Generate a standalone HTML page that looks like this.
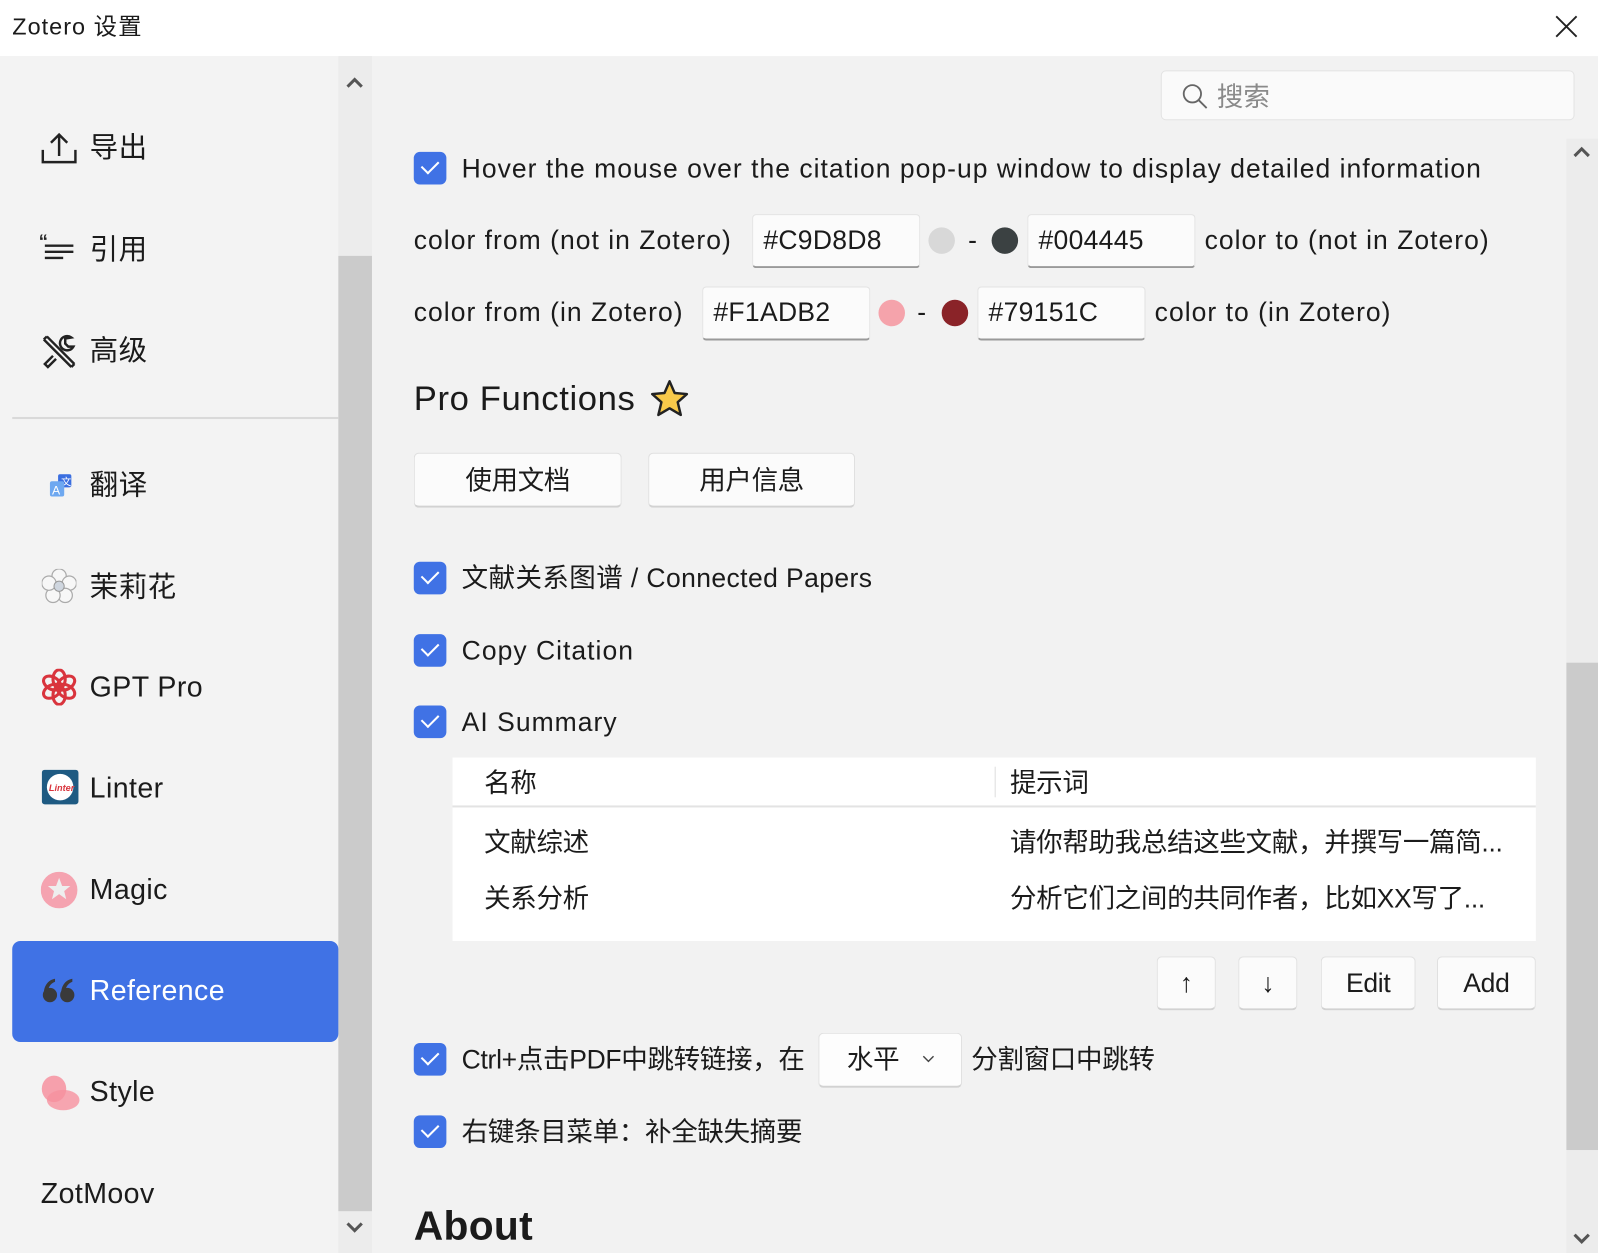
<!DOCTYPE html>
<html><head><meta charset="utf-8">
<style>
html,body{margin:0;padding:0;width:1598px;height:1253px;overflow:hidden;background:#f2f2f2}
#w{position:absolute;left:0;top:0;width:1568px;height:1229px;transform:scale(1.01913,1.01953);transform-origin:0 0;background:#f2f2f2;font-family:"Liberation Sans","Noto Sans CJK SC",sans-serif;color:#1b1b1b}
.a{position:absolute;white-space:nowrap}
.t{font-size:26px;line-height:34px;letter-spacing:1px}
.c{letter-spacing:-0.3px}
.side{font-size:28px;line-height:36px;letter-spacing:0.4px}
.cb{position:absolute;width:32px;height:32px;border-radius:6px;background:#4072e5}
.cb:after{content:"";position:absolute;left:8px;top:8px;width:14px;height:8px;border-left:2.5px solid #fff;border-bottom:2.5px solid #fff;transform:rotate(-45deg);transform-origin:center}
.inp{position:absolute;background:#fbfbfb;border:1px solid #e3e3e3;border-bottom:2px solid #9a9a9a;border-radius:4px;box-sizing:border-box;font-size:26px;line-height:48px;padding-left:10px;letter-spacing:0.3px}
.btn{position:absolute;background:#fbfbfb;border:1px solid #e0e0e0;border-bottom:2px solid #d2d2d2;border-radius:5px;box-sizing:border-box;font-size:26px;text-align:center;letter-spacing:-0.3px}
.dot{position:absolute;width:26px;height:26px;border-radius:50%}
</style></head><body><div id="w">
<div class="a" style="left:0;top:0;width:1568px;height:55px;background:#fff"></div>
<div class="a" style="left:12px;top:10px;font-size:23px;line-height:32px;letter-spacing:1px">Zotero 设置</div>
<svg class="a" style="left:1525px;top:14px" width="24" height="24" viewBox="0 0 24 24"><path d="M2 2L22 22M22 2L2 22" stroke="#222" stroke-width="1.8"/></svg>

<div class="a" style="left:0;top:55px;width:332px;height:1174px;background:#f3f3f3"></div>
<div class="a" style="left:332px;top:55px;width:33px;height:1174px;background:#ececec"></div>
<div class="a" style="left:332px;top:251px;width:33px;height:937px;background:#cbcbcb"></div>
<svg class="a" style="left:339px;top:74px" width="18" height="14" viewBox="0 0 18 14"><path d="M2 11L9 4L16 11" stroke="#555" stroke-width="3" fill="none"/></svg>
<svg class="a" style="left:339px;top:1197px" width="18" height="14" viewBox="0 0 18 14"><path d="M2 3L9 10L16 3" stroke="#555" stroke-width="3" fill="none"/></svg>

<svg class="a" style="left:40px;top:129px" width="36" height="32" viewBox="0 0 36 32"><path d="M2 18V30H34V18M18 24V3M10 11L18 3L26 11" stroke="#222" stroke-width="2.4" fill="none"/></svg>
<div class="a side c" style="left:88px;top:127px">导出</div>
<svg class="a" style="left:38px;top:227px" width="42" height="36" viewBox="0 0 42 36"><text x="0" y="16" font-size="18" font-weight="bold" font-family="Liberation Sans" fill="#222">“</text><path d="M6 14H34M6 20H34M6 26H24" stroke="#222" stroke-width="2.4"/><text x="25" y="40" font-size="18" font-weight="bold" font-family="Liberation Sans" fill="#222">„</text></svg>
<div class="a side c" style="left:88px;top:227px">引用</div>
<svg class="a" style="left:40px;top:327px" width="36" height="36" viewBox="0 0 36 36"><path d="M6 3L33 30M3 6L30 33M3 6L6 3M30 33L33 30" stroke="#222" stroke-width="2.4" fill="none"/><path d="M30 4A7 7 0 1 0 32 13L27 13L24 10L24 5Z M12 22L4 30L7 33L15 25" stroke="#222" stroke-width="2.4" fill="none"/></svg>
<div class="a side c" style="left:88px;top:326px">高级</div>
<div class="a" style="left:12px;top:409px;width:320px;height:2px;background:#d9d9d9"></div>

<svg class="a" style="left:48px;top:465px" width="24" height="24" viewBox="0 0 24 24"><rect x="9" y="0" width="13" height="13" rx="2" fill="#3a6ee0"/><text x="12" y="11" font-size="10" fill="#fff">文</text><rect x="1" y="7" width="14" height="15" rx="2" fill="#6ea8f0"/><text x="3" y="20" font-size="12" fill="#fff" font-family="Liberation Sans">A</text></svg>
<div class="a side c" style="left:88px;top:458px">翻译</div>
<svg class="a" style="left:41px;top:558px" width="34" height="34" viewBox="0 0 34 34"><g fill="#f7f7f7" stroke="#aaa" stroke-width="1.2"><circle cx="17" cy="7" r="7"/><circle cx="27" cy="14" r="7"/><circle cx="23" cy="26" r="7"/><circle cx="11" cy="26" r="7"/><circle cx="7" cy="14" r="7"/></g><circle cx="17" cy="17" r="5" fill="#cfd6df" stroke="#999"/></svg>
<div class="a side c" style="left:88px;top:558px">茉莉花</div>
<svg class="a" style="left:40px;top:656px" width="36" height="36" viewBox="0 0 36 36"><g fill="none" stroke="#d9343d" stroke-width="3"><ellipse cx="18" cy="10" rx="6" ry="9"/><ellipse cx="18" cy="10" rx="6" ry="9" transform="rotate(60 18 18)"/><ellipse cx="18" cy="10" rx="6" ry="9" transform="rotate(120 18 18)"/><ellipse cx="18" cy="10" rx="6" ry="9" transform="rotate(180 18 18)"/><ellipse cx="18" cy="10" rx="6" ry="9" transform="rotate(240 18 18)"/><ellipse cx="18" cy="10" rx="6" ry="9" transform="rotate(300 18 18)"/></g></svg>
<div class="a side" style="left:88px;top:656px">GPT Pro</div>
<svg class="a" style="left:41px;top:755px" width="36" height="36" viewBox="0 0 36 36"><rect width="36" height="34" rx="3" fill="#1e5a82"/><circle cx="18" cy="17" r="13" fill="#fff"/><text x="7" y="21" font-size="9" font-style="italic" font-weight="bold" fill="#d9343d" font-family="Liberation Sans">Linter</text></svg>
<div class="a side" style="left:88px;top:755px">Linter</div>
<svg class="a" style="left:40px;top:855px" width="36" height="36" viewBox="0 0 36 36"><circle cx="18" cy="18" r="18" fill="#f5a3b0"/><path d="M18 6L21 14L29 14L23 19L25 27L18 22L11 27L13 19L7 14L15 14Z" fill="#eee"/></svg>
<div class="a side" style="left:88px;top:855px">Magic</div>

<div class="a" style="left:12px;top:923px;width:320px;height:99px;background:#4072e5;border-radius:8px"></div>
<svg class="a" style="left:41px;top:958px" width="34" height="26" viewBox="0 0 34 26"><g fill="#3a3a3a"><circle cx="8" cy="18" r="7"/><path d="M2 17C2 8 7 3 13 2L13 5C8 7 6 11 6 16Z"/><circle cx="25" cy="18" r="7"/><path d="M19 17C19 8 24 3 30 2L30 5C25 7 23 11 23 16Z"/></g></svg>
<div class="a side" style="left:88px;top:954px;color:#fff">Reference</div>

<svg class="a" style="left:40px;top:1054px" width="38" height="36" viewBox="0 0 38 36"><ellipse cx="13" cy="14" rx="12" ry="13" fill="#f6919f" opacity=".85"/><ellipse cx="22" cy="25" rx="16" ry="10" fill="#f6919f" opacity=".8"/></svg>
<div class="a side" style="left:88px;top:1053px">Style</div>
<div class="a side" style="left:40px;top:1153px">ZotMoov</div>

<div class="a" style="left:1139px;top:69px;width:406px;height:49px;background:#fafafa;border:1px solid #e3e3e3;border-radius:5px;box-sizing:border-box"></div>
<svg class="a" style="left:1159px;top:81px" width="28" height="28" viewBox="0 0 28 28"><circle cx="11" cy="11" r="8.5" stroke="#666" stroke-width="1.8" fill="none"/><path d="M17 17L25 25" stroke="#666" stroke-width="1.8"/></svg>
<div class="a" style="left:1194px;top:78px;font-size:26px;line-height:34px;color:#8a8a8a">搜索</div>

<div class="a" style="left:1537px;top:136px;width:31px;height:1093px;background:#ececec"></div>
<div class="a" style="left:1537px;top:650px;width:31px;height:478px;background:#cbcbcb"></div>
<svg class="a" style="left:1543px;top:142px" width="18" height="14" viewBox="0 0 18 14"><path d="M2 11L9 4L16 11" stroke="#555" stroke-width="3" fill="none"/></svg>
<svg class="a" style="left:1543px;top:1208px" width="18" height="14" viewBox="0 0 18 14"><path d="M2 3L9 10L16 3" stroke="#555" stroke-width="3" fill="none"/></svg>

<div class="cb" style="left:406px;top:149px"></div>
<div class="a t" style="left:453px;top:148px">Hover the mouse over the citation pop-up window to display detailed information</div>

<div class="a t" style="left:406px;top:218px">color from (not in Zotero)</div>
<div class="inp" style="left:738px;top:210px;width:165px;height:53px">#C9D8D8</div>
<div class="dot" style="left:911px;top:223px;background:#d8d8d8"></div>
<div class="a t" style="left:950px;top:218px">-</div>
<div class="dot" style="left:973px;top:223px;background:#3b4142"></div>
<div class="inp" style="left:1008px;top:210px;width:165px;height:53px">#004445</div>
<div class="a t" style="left:1182px;top:218px">color to (not in Zotero)</div>

<div class="a t" style="left:406px;top:289px">color from (in Zotero)</div>
<div class="inp" style="left:689px;top:281px;width:165px;height:53px">#F1ADB2</div>
<div class="dot" style="left:862px;top:294px;background:#f5a3ab"></div>
<div class="a t" style="left:900px;top:289px">-</div>
<div class="dot" style="left:924px;top:294px;background:#8a2328"></div>
<div class="inp" style="left:959px;top:281px;width:165px;height:53px">#79151C</div>
<div class="a t" style="left:1133px;top:289px">color to (in Zotero)</div>

<div class="a" style="left:406px;top:369px;font-size:34px;line-height:44px;letter-spacing:0.6px">Pro Functions</div>
<svg class="a" style="left:637px;top:371px" width="40" height="40" viewBox="0 0 40 40"><path d="M20 3L25 14.5L37 15.5L28 23.5L31 36L20 29.5L9 36L12 23.5L3 15.5L15 14.5Z" fill="#f8c94a" stroke="#222" stroke-width="2.4" stroke-linejoin="round"/></svg>

<div class="btn" style="left:406px;top:444px;width:204px;height:54px;line-height:52px">使用文档</div>
<div class="btn" style="left:636px;top:444px;width:203px;height:54px;line-height:52px">用户信息</div>

<div class="cb" style="left:406px;top:551px"></div>
<div class="a t" style="left:453px;top:550px;letter-spacing:0.4px">文献关系图谱 / Connected Papers</div>
<div class="cb" style="left:406px;top:622px"></div>
<div class="a t" style="left:453px;top:621px">Copy Citation</div>
<div class="cb" style="left:406px;top:692px"></div>
<div class="a t" style="left:453px;top:691px">AI Summary</div>

<div class="a" style="left:444px;top:743px;width:1063px;height:180px;background:#fff"></div>
<div class="a" style="left:444px;top:790px;width:1063px;height:2px;background:#e3e3e3"></div>
<div class="a" style="left:976px;top:752px;width:1px;height:30px;background:#ddd"></div>
<div class="a t c" style="left:475px;top:751px">名称</div>
<div class="a t c" style="left:991px;top:751px">提示词</div>
<div class="a t c" style="left:475px;top:809px">文献综述</div>
<div class="a t c" style="left:991px;top:809px">请你帮助我总结这些文献，并撰写一篇简...</div>
<div class="a t c" style="left:475px;top:864px">关系分析</div>
<div class="a t c" style="left:991px;top:864px">分析它们之间的共同作者，比如XX写了...</div>

<div class="btn" style="left:1135px;top:938px;width:58px;height:53px;line-height:51px">↑</div>
<div class="btn" style="left:1215px;top:938px;width:58px;height:53px;line-height:51px">↓</div>
<div class="btn" style="left:1296px;top:938px;width:93px;height:53px;line-height:51px">Edit</div>
<div class="btn" style="left:1410px;top:938px;width:97px;height:53px;line-height:51px">Add</div>

<div class="cb" style="left:406px;top:1023px"></div>
<div class="a t c" style="left:453px;top:1022px">Ctrl+点击PDF中跳转链接，在</div>
<div class="btn" style="left:803px;top:1013px;width:141px;height:54px;line-height:50px;text-align:left;padding-left:27px;background:#fdfdfd">水平</div>
<svg class="a" style="left:904px;top:1034px" width="14" height="10" viewBox="0 0 14 10"><path d="M2 2L7 7L12 2" stroke="#444" stroke-width="1.4" fill="none"/></svg>
<div class="a t c" style="left:953px;top:1022px">分割窗口中跳转</div>

<div class="cb" style="left:406px;top:1094px"></div>
<div class="a t c" style="left:453px;top:1093px">右键条目菜单：补全缺失摘要</div>

<div class="a" style="left:406px;top:1178px;font-size:40px;line-height:50px;font-weight:bold;letter-spacing:0.3px">About</div>
</div></body></html>
